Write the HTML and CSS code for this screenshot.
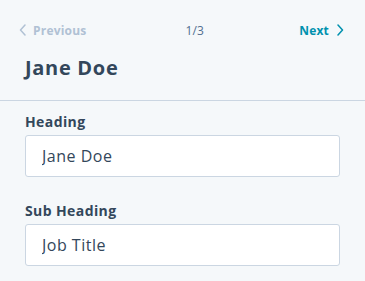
FILE: index.html
```html
<!DOCTYPE html>
<html lang="en">
<head>
    <meta charset="UTF-8">
    <title>Card editor</title>
    <link rel="stylesheet" href="styles.css">
</head>
<body>
    <div class="panel">
        <div class="pager">
            <span class="prev">
                <svg width="8" height="12" viewBox="0 0 8 12"><path d="M6 1L1.5 6L6 11" fill="none" stroke="currentColor" stroke-width="1.5" stroke-linecap="round" stroke-linejoin="round"/></svg>
                Previous
            </span>
            <span class="count">1/3</span>
            <span class="next">
                Next
                <svg width="8" height="12" viewBox="0 0 8 12"><path d="M2 1L6.5 6L2 11" fill="none" stroke="currentColor" stroke-width="1.5" stroke-linecap="round" stroke-linejoin="round"/></svg>
            </span>
        </div>
        <h1>Jane Doe</h1>
    </div>
    <form class="fields">
        <label>Heading
            <input type="text" value="Jane Doe">
        </label>
        <label>Sub Heading
            <input type="text" value="Job Title">
        </label>
    </form>
</body>
</html>
```
FILE: styles.css
```css
body {
    font-family: "Open Sans", "Noto Sans", sans-serif;
    margin: 0;
    padding: 0;
    background-color: #f5f8fa;
    color: #33475b;
}
.panel {
    padding: 0 21px 0 19px;
    border-bottom: 1px solid #cbd6e2;
}
.pager {
    display: flex;
    align-items: center;
    justify-content: space-between;
    height: 60px;
    font-size: 12px;
    font-weight: 700;
    letter-spacing: 0.2px;
}
.prev {
    color: #b0c1d4;
    display: flex;
    align-items: center;
    gap: 6px;
}
.count {
    font-weight: 400;
    color: #516f90;
    margin-left: 4px;
}
.next {
    color: #0091ae;
    display: flex;
    align-items: center;
    gap: 7px;
}
h1 {
    margin: 0;
    padding: 0 0 24px 6px;
    font-size: 20px;
    line-height: 16px;
    font-weight: 700;
    letter-spacing: 0.7px;
}
.fields {
    display: flex;
    flex-direction: column;
    gap: 24px;
    padding: 11px 25px 0 25px;
}
label {
    display: flex;
    flex-direction: column;
    gap: 4px;
    font-size: 14px;
    font-weight: 700;
    letter-spacing: 0.4px;
}
input[type="text"] {
    box-sizing: border-box;
    height: 42px;
    padding: 0 16px;
    font-family: inherit;
    font-size: 16px;
    letter-spacing: 0.5px;
    color: #33475b;
    background: #fff;
    border: 1px solid #cbd6e2;
    border-radius: 3px;
    width: 100%;
}
```
